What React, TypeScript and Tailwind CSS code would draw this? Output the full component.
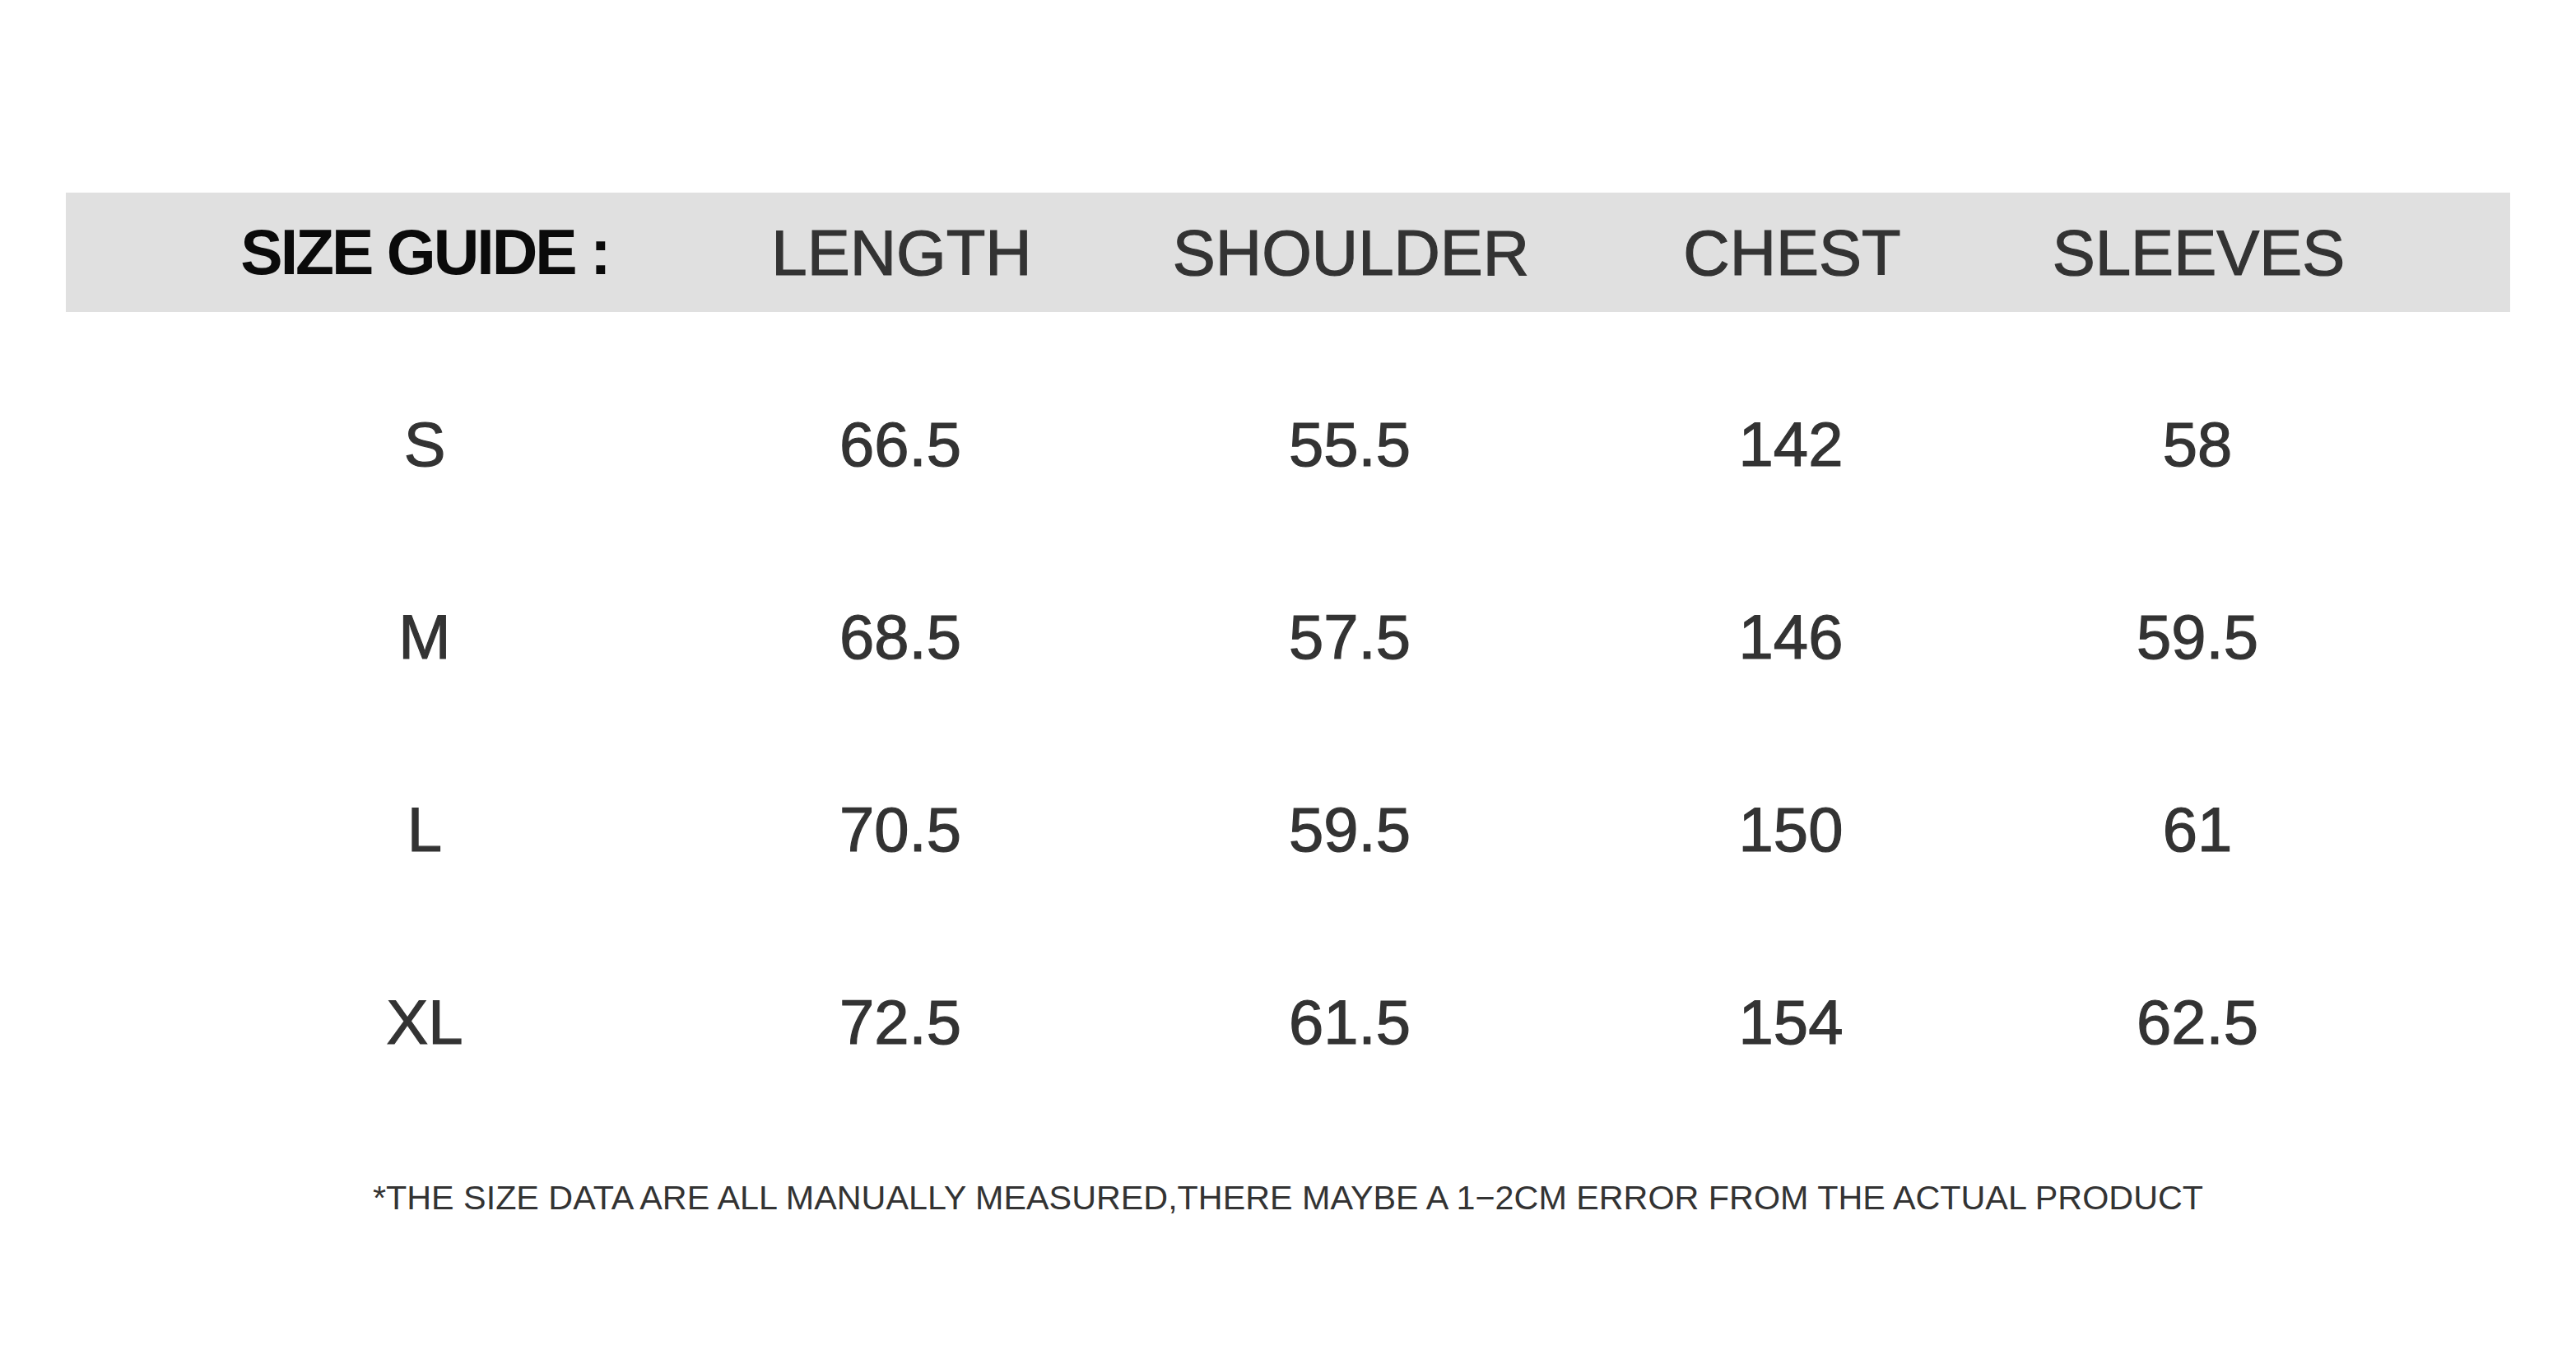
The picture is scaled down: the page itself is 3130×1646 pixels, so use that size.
import React from "react";

const cols = ["w-[532px]", "w-[624px]", "w-[468px]", "w-[604px]", "w-[384px]"];

const rows = [
  ["S", "66.5", "55.5", "142", "58"],
  ["M", "68.5", "57.5", "146", "59.5"],
  ["L", "70.5", "59.5", "150", "61"],
  ["XL", "72.5", "61.5", "154", "62.5"],
];

export default function App() {
  return (
    <div
      className="w-[3130px] h-[1646px] bg-white flex flex-col"
      style={{ fontFamily: "'Liberation Sans', Arial, sans-serif" }}
    >
      <div className="h-[234px]" />
      <div className="ml-[80px] w-[2970px] h-[145px] bg-[#e0e0e0] flex items-center pl-[170px]">
        <div className={`${cols[0]} flex justify-center`}>
          <span className="text-[77px] leading-none font-bold text-[#0a0a0a] tracking-[-3px] whitespace-pre">
            SIZE GUIDE :
          </span>
        </div>
        {["LENGTH", "SHOULDER", "CHEST", "SLEEVES"].map((h, i) => (
          <div key={h} className={`${cols[i + 1]} flex justify-center pl-[3px]`}>
            <span className="text-[78px] leading-none text-[#333333] [-webkit-text-stroke:1.2px_#333333]">{h}</span>
          </div>
        ))}
      </div>
      <div className="ml-[80px] w-[2970px] pl-[170px] pt-[44px] flex flex-col">
        {rows.map((r) => (
          <div key={r[0]} className="h-[234px] flex items-center">
            {r.map((c, i) => (
              <div key={i} className={`${cols[i]} flex justify-center`}>
                <span className="text-[76px] leading-none text-[#333333] [-webkit-text-stroke:1.2px_#333333]">{c}</span>
              </div>
            ))}
          </div>
        ))}
      </div>
      <div className="flex justify-center mt-[76px]">
        <span className="text-[41.3px] leading-none text-[#333333] whitespace-pre">
          *THE SIZE DATA ARE ALL MANUALLY MEASURED,THERE MAYBE A 1−2CM ERROR FROM THE ACTUAL PRODUCT
        </span>
      </div>
    </div>
  );
}
